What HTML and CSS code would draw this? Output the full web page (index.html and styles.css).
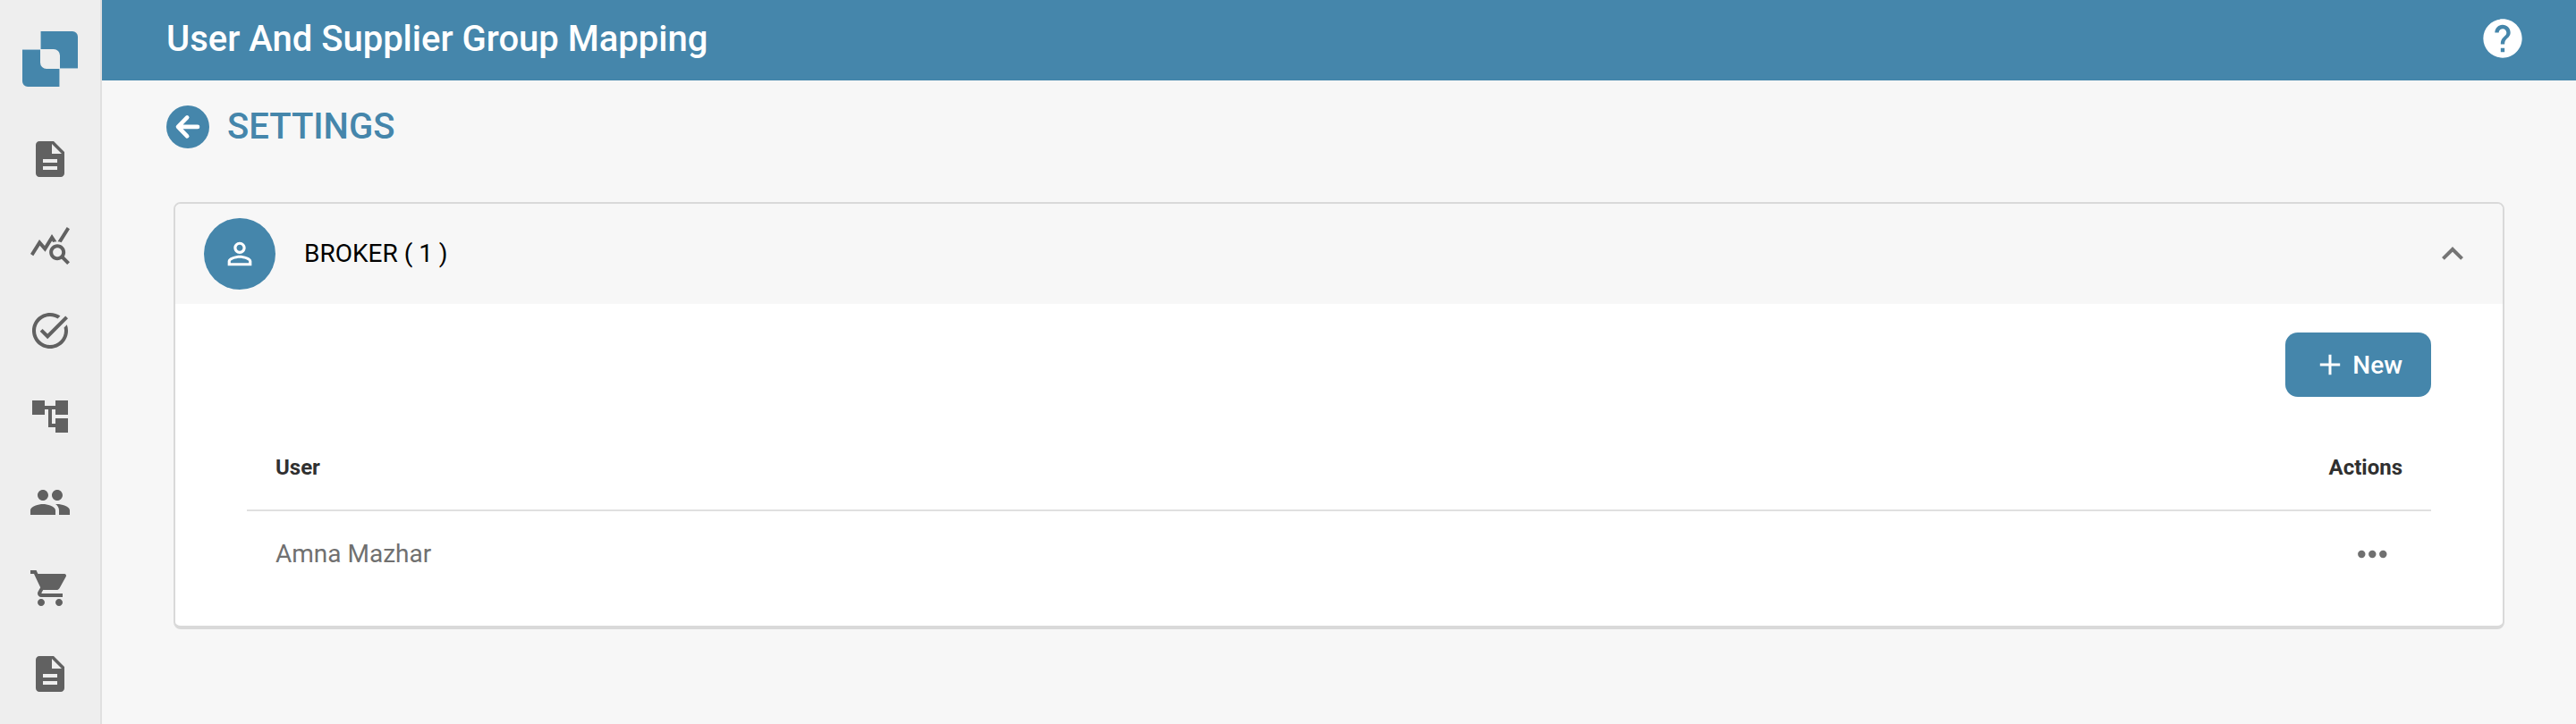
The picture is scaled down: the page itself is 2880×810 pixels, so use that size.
FILE: index.html
```html
<!DOCTYPE html>
<html lang="en">
<head>
<meta charset="utf-8">
<title>User And Supplier Group Mapping</title>
<link rel="stylesheet" href="styles.css">
</head>
<body>
<div class="app">
  <nav class="rail">
    <svg class="logo" viewBox="0 0 62 62"><path d="M20 0H56a6 6 0 0 1 6 6V42H42V27a7 7 0 0 0-7-7H20z"/><path d="M0 20H20V35a7 7 0 0 0 7 7H42V62H6a6 6 0 0 1-6-6z"/><path class="seam" d="M20 20.5H0M20.5 20V0M42 41.500H62M41.500 42V62"/></svg>
    <svg class="nav-icon" viewBox="0 0 24 24"><path d="M14 2H6c-1.100 0-1.990.9-1.990 2L4 20c0 1.100.89 2 1.990 2H18c1.100 0 2-.9 2-2V8l-6-6zm2 16H8v-2h8v2zm0-4H8v-2h8v2zm-3-5V3.500L18.500 9H13z"/></svg>
    <svg class="nav-icon" viewBox="0 0 24 24"><path d="M19.880 18.470c.44-.7.7-1.510.7-2.390 0-2.490-2.010-4.500-4.500-4.500s-4.500 2.010-4.500 4.500 2.010 4.500 4.490 4.500c.88 0 1.700-.26 2.390-.7L21.580 23 23 21.580l-3.120-3.110zm-3.800.11c-1.380 0-2.500-1.120-2.500-2.500s1.120-2.500 2.500-2.500 2.500 1.120 2.500 2.500-1.120 2.500-2.500 2.500zm-.36-8.500c-.74.02-1.450.18-2.100.45l-.55-.83-3.800 6.180-3.010-3.520-3.630 5.810L1 17l5-8 3 3.500L13 6l2.720 4.080zm2.590.5c-.64-.28-1.330-.45-2.050-.49L21.380 2 23 3.180l-4.690 7.400z"/></svg>
    <svg class="nav-icon" viewBox="0 0 24 24"><path d="M22 5.180 10.590 16.600l-4.240-4.240 1.410-1.410 2.830 2.830 10-10L22 5.180zm-2.210 5.040c.13.57.21 1.170.21 1.780 0 4.420-3.580 8-8 8s-8-3.580-8-8 3.580-8 8-8c1.580 0 3.040.46 4.280 1.250l1.440-1.440C16.100 2.670 14.130 2 12 2 6.480 2 2 6.480 2 12s4.480 10 10 10 10-4.480 10-10c0-1.190-.22-2.330-.6-3.390l-1.610 1.610z"/></svg>
    <svg class="nav-icon" viewBox="0 0 24 24"><path d="M22 11V3h-7v3H9V3H2v8h7V8h2v10h4v3h7v-8h-7v3h-2V8h2v3z"/></svg>
    <svg class="nav-icon" viewBox="0 0 24 24"><path d="M16 11c1.660 0 2.990-1.340 2.990-3S17.660 5 16 5s-3 1.340-3 3 1.340 3 3 3zm-8 0c1.660 0 2.990-1.340 2.990-3S9.660 5 8 5 5 6.340 5 8s1.340 3 3 3zm0 2c-2.330 0-7 1.170-7 3.500V19h14v-2.500c0-2.330-4.670-3.500-7-3.500zm8 0c-.29 0-.62.02-.97.05 1.160.84 1.970 1.970 1.970 3.450V19h6v-2.500c0-2.330-4.670-3.500-7-3.500z"/></svg>
    <svg class="nav-icon" viewBox="0 0 24 24"><path d="M7 18c-1.100 0-1.990.9-1.990 2S5.900 22 7 22s2-.9 2-2-.9-2-2-2zM1 2v2h2l3.600 7.590-1.350 2.450c-.16.28-.25.61-.25.96 0 1.100.9 2 2 2h12v-2H7.420c-.14 0-.25-.11-.25-.25l.03-.12.9-1.630h7.450c.75 0 1.410-.41 1.750-1.030l3.580-6.490A1.003 1.003 0 0 0 20 4H5.210l-.94-2H1zm16 16c-1.100 0-1.990.9-1.990 2s.89 2 1.990 2 2-.9 2-2-.9-2-2-2z"/></svg>
    <svg class="nav-icon" viewBox="0 0 24 24"><path d="M14 2H6c-1.100 0-1.990.9-1.990 2L4 20c0 1.100.89 2 1.990 2H18c1.100 0 2-.9 2-2V8l-6-6zm2 16H8v-2h8v2zm0-4H8v-2h8v2zm-3-5V3.500L18.500 9H13z"/></svg>
  </nav>
  <div class="page">
    <header class="topbar">
      <h1 class="title">User And Supplier Group Mapping</h1>
      <svg class="help" viewBox="0 0 24 24"><path d="M12 2C6.480 2 2 6.480 2 12s4.480 10 10 10 10-4.480 10-10S17.520 2 12 2zm1 17h-2v-2h2v2zm2.070-7.750-.9.920C13.450 12.900 13 13.500 13 15h-2v-.5c0-1.100.45-2.100 1.170-2.830l1.240-1.260c.37-.36.59-.86.59-1.410 0-1.100-.9-2-2-2s-2 .9-2 2H8c0-2.210 1.790-4 4-4s4 1.790 4 4c0 .88-.36 1.680-.93 2.250z"/></svg>
    </header>
    <main class="content">
      <div class="heading">
        <svg class="back" viewBox="0 0 48 48"><circle cx="24" cy="24" r="24"/><path d="M35 23.900H13.500M23.200 13.400 13 23.900 23.200 34.400"/></svg>
        <h2 class="heading-text">SETTINGS</h2>
      </div>
      <section class="card">
        <div class="card-head">
          <span class="avatar"><svg class="person" viewBox="0 0 24 24"><path d="M12 5.900c1.160 0 2.100.94 2.100 2.100s-.94 2.100-2.100 2.100S9.900 9.160 9.900 8s.94-2.100 2.100-2.100m0 9c2.970 0 6.100 1.460 6.100 2.100v1.100H5.900V17c0-.64 3.130-2.100 6.100-2.100M12 4C9.790 4 8 5.790 8 8s1.790 4 4 4 4-1.790 4-4-1.790-4-4-4zm0 9c-2.670 0-8 1.340-8 4v3h16v-3c0-2.660-5.330-4-8-4z"/></svg></span>
          <span class="group-name">BROKER ( 1 )</span>
          <svg class="chevron" viewBox="0 0 24 24"><path d="m12 8-6 6 1.410 1.410L12 10.830l4.590 4.580L18 14z"/></svg>
        </div>
        <div class="card-body">
          <button class="new-button"><svg class="plus" viewBox="0 0 24 24"><path d="M12 .8V23.200M.8 12H23.200"/></svg><span class="new-label">New</span></button>
          <div class="table">
            <div class="row row-head"><span>User</span><span>Actions</span></div>
            <div class="row"><span class="user">Amna Mazhar</span><svg class="dots" viewBox="0 0 34 10"><circle cx="5.300" cy="5" r="4.200"/><circle cx="17.300" cy="5" r="4.200"/><circle cx="29.300" cy="5" r="4.200"/></svg></div>
          </div>
        </div>
      </section>
    </main>
  </div>
</div>
</body>
</html>
```
FILE: styles.css
```css
* { box-sizing: border-box; }
body { margin: 0; background: #f7f7f7; font-family: Roboto, "Liberation Sans", sans-serif; color: #000; }
.app { display: flex; height: 810px; overflow: hidden; }
.rail { flex: none; width: 114px; padding-top: 35px; background: #eee; border-right: 2px solid #e0e0e0; display: flex; flex-direction: column; align-items: center; gap: 48px; }
.logo { flex: none; width: 62px; height: 62px; margin-bottom: 9px; fill: #4586ab; }
.seam { stroke: #a3c1d3; stroke-width: 1; fill: none; }
.nav-icon { flex: none; width: 48px; height: 48px; fill: #616161; }
.page { flex: 1; min-width: 0; }
.topbar { height: 90px; padding: 0 56px 5px 72px; background: #4586ab; display: flex; align-items: center; justify-content: space-between; }
.title { margin: 0; padding-top: 3px; font-size: 40px; line-height: 48px; font-weight: 500; color: #fff; }
.help { width: 52px; height: 52px; fill: #fff; }
.content { padding: 28px 80px 0 72px; }
.heading { display: flex; align-items: center; gap: 20px; height: 48px; }
.back { width: 48px; height: 48px; fill: #4586ab; }
.back path { fill: none; stroke: #fff; stroke-width: 4.6; stroke-linecap: round; stroke-linejoin: round; }
.heading-text { margin: 0; font-size: 40px; line-height: 48px; font-weight: 500; color: #4586ab; }
.card { margin: 60px 0 0 8px; border: 2px solid #d9d9d9; border-bottom-width: 4px; border-radius: 8px; background: #fff; overflow: hidden; }
.card-head { height: 112px; padding: 0 32px; background: #f7f7f7; display: flex; align-items: center; gap: 32px; }
.avatar { width: 80px; height: 80px; border-radius: 50%; background: #4586ab; display: flex; align-items: center; justify-content: center; }
.person { width: 40px; height: 40px; fill: #fff; }
.group-name { flex: 1; font-size: 28px; line-height: 40px; }
.chevron { width: 48px; height: 48px; fill: #757575; }
.card-body { height: 360px; padding: 32px 80px; display: flex; flex-direction: column; align-items: flex-end; gap: 32px; }
.new-button { width: 163px; height: 72px; padding: 0 32px 0 0; border: 0; border-radius: 14px; background: #4586ab; color: #fff; font: 500 28px/40px Roboto, "Liberation Sans", sans-serif; display: flex; align-items: center; justify-content: flex-end; gap: 13px; }
.new-label { padding-top: 2px; }
.plus { width: 24px; height: 24px; stroke: #fff; stroke-width: 3; fill: none; }
.table { width: 100%; }
.row { height: 96px; padding: 0 32px; display: flex; align-items: center; justify-content: space-between; }
.row-head { border-bottom: 2px solid #e0e0e0; font-size: 24px; font-weight: 700; color: #303030; }
.user { padding-bottom: 2px; font-size: 28px; color: #707070; }
.dots { width: 34px; height: 10px; margin-right: 17px; fill: #707070; }
```
